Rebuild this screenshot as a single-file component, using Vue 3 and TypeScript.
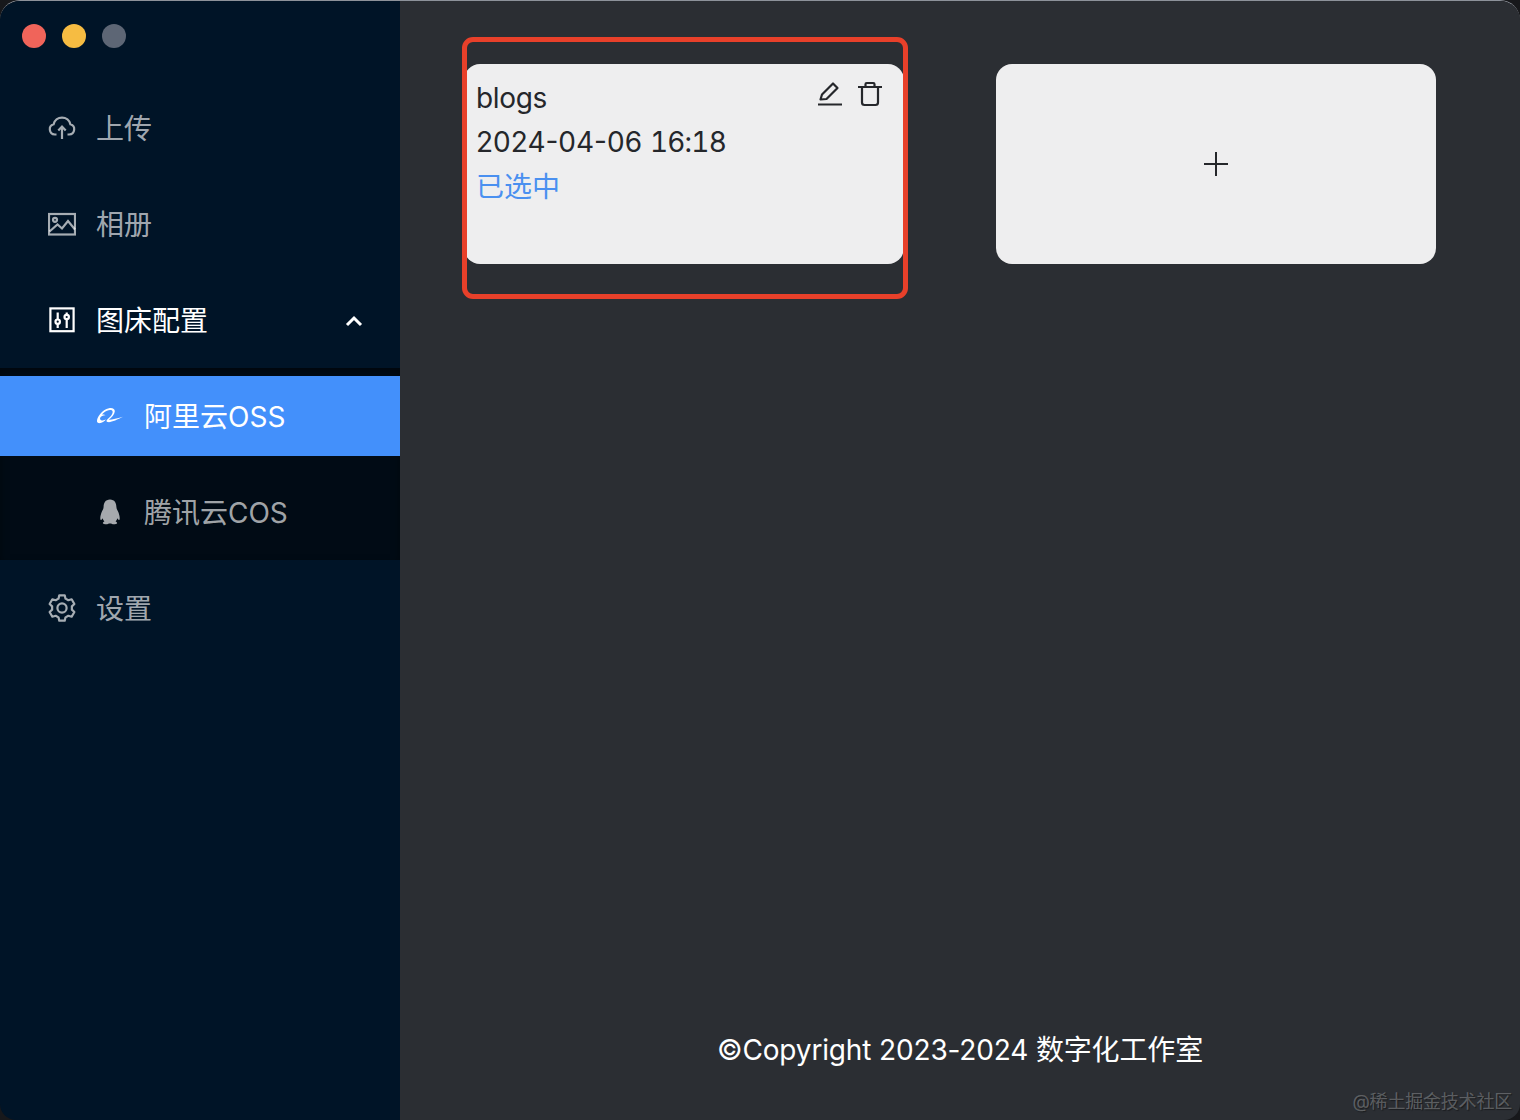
<script setup lang="ts">
function gear(cx: number, cy: number, outer: number, inner: number): string {
  const pts: string[] = []
  for (let i = 0; i < 6; i++) {
    const a = (Math.PI / 3) * i - Math.PI / 2
    const w = 0.27
    const g = 0.36
    const list: [number, number][] = [
      [a - g, inner],
      [a - w + 0.06, outer],
      [a + w - 0.06, outer],
      [a + g, inner],
    ]
    for (const [t, r] of list) {
      pts.push(`${(cx + r * Math.cos(t)).toFixed(2)} ${(cy + r * Math.sin(t)).toFixed(2)}`)
    }
  }
  return 'M' + pts.join('L') + 'Z'
}
const gearPath = gear(14, 14, 13, 10)
</script>

<template>
  <div class="stage">
    <div class="window">
      <aside class="side">
        <div class="lights">
          <span class="light red"></span>
          <span class="light yellow"></span>
          <span class="light gray"></span>
        </div>

        <div class="item">
          <svg class="ico" width="28" height="28" viewBox="0 0 28 28" fill="none" stroke="currentColor" stroke-width="2.2">
            <path d="M8.5 20.5H6.8A5.2 5.2 0 0 1 5.6 10.3 8.6 8.6 0 0 1 22.4 10.3 5.2 5.2 0 0 1 21.2 20.5H19.5" />
            <path d="M14 25V12.5M10.3 16.5 14 12.5 17.7 16.5" />
          </svg>
          <span class="label">上传</span>
        </div>

        <div class="item">
          <svg class="ico" width="28" height="28" viewBox="0 0 28 28" fill="none" stroke="currentColor" stroke-width="2.2">
            <rect x="1" y="4" width="26" height="20.5" />
            <circle cx="7" cy="9.8" r="2" />
            <path d="M1.5 21.5 9.5 14.5 14 18.5 20 11 27 19.5" />
          </svg>
          <span class="label">相册</span>
        </div>

        <div class="item open">
          <svg class="ico" width="28" height="28" viewBox="0 0 28 28" fill="none" stroke="currentColor" stroke-width="2.2">
            <rect x="2.4" y="2.4" width="23.2" height="22.8" />
            <path d="M9.7 6.5V13M9.7 18V22M18.7 6.5V8.5M18.7 13.5V22" />
            <circle cx="9.7" cy="15.7" r="2.2" />
            <circle cx="18.7" cy="11" r="2.2" />
          </svg>
          <span class="label">图床配置</span>
          <svg class="chev" width="20" height="12" viewBox="0 0 20 12" fill="none" stroke="currentColor" stroke-width="3">
            <path d="M3 10 10 3 17 10" />
          </svg>
        </div>

        <div class="sub">
          <div class="subitem active">
            <svg class="ico" width="28" height="28" viewBox="0 0 28 28" fill="currentColor">
              <path d="M1 19.5C.5 15.5 6 7.5 13 6.2 16.5 5.6 19 6.8 18.8 9.5 18.5 12.5 15.5 15.5 12.8 17.8 16 18 20.5 16.5 27 14.8 21 17.8 15 20.8 11.5 20 9.8 19.5 10.5 18 12 16.8 14.5 14.8 17 12 16.6 9.6 16.2 7.8 13.5 7.8 11 8.7 8.8 9.5 7 11 6 12.5 7.5 12.3 9 12.6 9.5 13.2 7.5 13 5 14 4.2 15.8 3.6 17.4 4.6 18.6 6.5 18.4 7.8 18.3 9 17.8 10 17.4 8.5 19 6.5 20.5 4.5 21 2.8 21.4 1.4 21 1 19.5Z" />
            </svg>
            <span class="label">阿里云OSS</span>
          </div>
          <div class="subitem">
            <svg class="ico" width="28" height="28" viewBox="0 0 28 28" fill="currentColor">
              <path d="M14 1.5C9.3 1.5 7.6 5.2 7.6 9 7.6 11 6.5 12.2 5.6 14.2 4.7 16.4 4 19.4 4.4 21.6 4.8 22.6 5.8 21.5 6.6 20.2 6.9 21.6 7.6 22.7 8.4 23.5 7.2 24 6.6 24.7 7 25.4 7.5 26.2 10.6 26.4 12 25.9 12.6 25.7 13 25.5 14 25.5 15 25.5 15.4 25.7 16 25.9 17.4 26.4 20.5 26.2 21 25.4 21.4 24.7 20.8 24 19.6 23.5 20.4 22.7 21.1 21.6 21.4 20.2 22.2 21.5 23.2 22.6 23.6 21.6 24 19.4 23.3 16.4 22.4 14.2 21.5 12.2 20.4 11 20.4 9 20.4 5.2 18.7 1.5 14 1.5Z" />
            </svg>
            <span class="label">腾讯云COS</span>
          </div>
        </div>

        <div class="item">
          <svg class="ico" width="28" height="28" viewBox="0 0 28 28" fill="none" stroke="currentColor" stroke-width="2.2" stroke-linejoin="round">
            <path :d="gearPath" />
            <circle cx="14" cy="14" r="4.6" />
          </svg>
          <span class="label">设置</span>
        </div>
      </aside>

      <main class="main">
        <div class="cards">
          <div class="card-wrap">
            <div class="card">
              <div class="actions">
                <svg width="28" height="28" viewBox="0 0 28 28" fill="none" stroke="currentColor" stroke-width="2.2">
                  <path d="M4.5 19.5 6 14.5 17 3.5 21.5 8 10.5 19 4.5 19.5Z" stroke-linejoin="round" />
                  <path d="M2 24.5H26" />
                </svg>
                <svg width="28" height="28" viewBox="0 0 28 28" fill="none" stroke="currentColor" stroke-width="2.2">
                  <path d="M2 7H26" />
                  <path d="M9.5 7V4.2C9.5 3.5 10 3 10.7 3H17.3C18 3 18.5 3.5 18.5 4.2V7" />
                  <path d="M6 7V22.5C6 23.9 7.1 25 8.5 25H19.5C20.9 25 22 23.9 22 22.5V7" />
                </svg>
              </div>
              <div class="line name">blogs</div>
              <div class="line">2024-04-06 <span class="time">16:18</span></div>
              <div class="line picked">已选中</div>
            </div>
            <div class="annot"></div>
          </div>
          <div class="card add">
            <svg width="24" height="24" viewBox="0 0 24 24" fill="none" stroke="currentColor" stroke-width="2">
              <path d="M12 0V24M0 12H24" />
            </svg>
          </div>
        </div>
        <footer class="foot">©Copyright 2023-2024 数字化工作室</footer>
        <div class="mark">@稀土掘金技术社区</div>
      </main>
    </div>
  </div>
</template>

<style>
html, body { margin: 0; background: #17181b; }
</style>

<style scoped>
.stage {
  width: 1520px;
  height: 1120px;
  font-family: Inter, "Noto Sans CJK SC", sans-serif;
}
.window {
  position: relative;
  display: flex;
  width: 1520px;
  height: 1120px;
  box-sizing: border-box;
  border-top: 1px solid #8d929a;
  border-radius: 20px 20px 16px 16px;
  overflow: hidden;
}
.side {
  width: 400px;
  flex: none;
  background: #001427;
  color: rgba(255, 255, 255, 0.65);
  font-size: 28px;
}
.lights {
  display: flex;
  gap: 16px;
  height: 79px;
  box-sizing: border-box;
  padding: 23px 0 0 22px;
}
.light { width: 24px; height: 24px; border-radius: 50%; }
.red { background: #f0645a; }
.yellow { background: #f6bc42; }
.gray { background: #5d6675; }
.item {
  display: flex;
  align-items: center;
  height: 96px;
  padding: 0 36px 0 48px;
}
.ico { flex: none; margin-right: 20px; }
.label { margin-bottom: 3px; }
.open { color: #fff; }
.chev { margin-left: auto; margin-top: 2px; }
.sub {
  background: #010b15;
  padding: 8px 0;
  box-shadow: inset 0 4px 8px rgba(0, 0, 0, 0.4);
}
.subitem {
  display: flex;
  align-items: center;
  height: 80px;
  padding-left: 96px;
}
.subitem + .subitem { margin-top: 16px; }
.active { background: #4390fb; color: #fff; }
.main {
  flex: 1;
  min-width: 0;
  display: flex;
  flex-direction: column;
  background: #2b2e33;
  position: relative;
  padding: 63px 0 0 64px;
}
.cards { display: flex; gap: 92px; }
.card-wrap { position: relative; }
.card {
  width: 440px;
  height: 200px;
  box-sizing: border-box;
  background: #eeeeef;
  border-radius: 16px;
  padding: 12px;
  color: #25272b;
  font-size: 28px;
  position: relative;
}
.line { height: 44px; line-height: 44px; }
.name { letter-spacing: -0.35px; }
.time { font-variant-numeric: tabular-nums; letter-spacing: -0.8px; }
.picked { color: #4a90f0; padding-top: 1px; }
.actions {
  position: absolute;
  top: 16px;
  right: 20px;
  display: flex;
  gap: 12px;
}
.annot {
  position: absolute;
  left: -2px;
  top: -27px;
  right: -4px;
  bottom: -35px;
  border: 5.5px solid #e8402a;
  border-radius: 11px;
  box-sizing: border-box;
  pointer-events: none;
}
.add {
  display: flex;
  align-items: center;
  justify-content: center;
}
.foot {
  margin-top: auto;
  margin-left: -64px;
  text-align: center;
  color: #fff;
  font-size: 28px;
  height: 44px;
  line-height: 44px;
  margin-bottom: 48px;
  letter-spacing: -0.15px;
}
.mark {
  position: absolute;
  right: 8px;
  bottom: 5px;
  font-size: 18px;
  line-height: 26px;
  letter-spacing: -0.2px;
  color: rgba(255, 255, 255, 0.27);
  text-shadow: 1px 1px 1px rgba(0, 0, 0, 0.4);
}
</style>
